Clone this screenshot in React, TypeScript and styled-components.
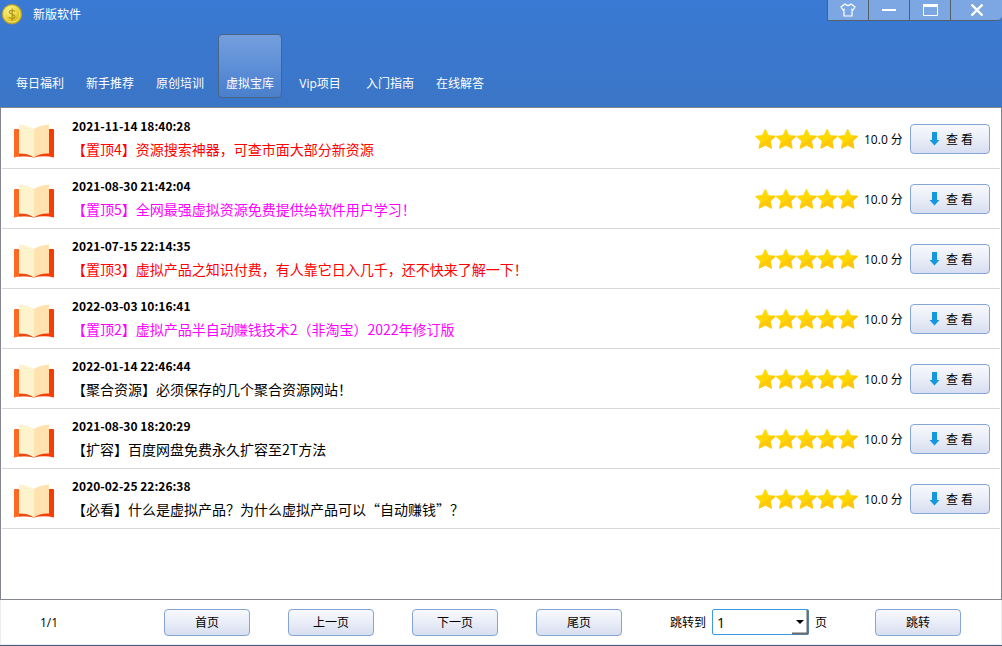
import React from "react";
import styled, { createGlobalStyle } from "styled-components";

const GlobalStyle = createGlobalStyle`
  * { box-sizing: border-box; }
  body {
    margin: 0;
    background: #fff;
    color: #000;
    font: 12px/20px "Open Sans", "Noto Sans CJK SC", sans-serif;
  }
  button, select { font: inherit; color: inherit; }
`;

const Window = styled.div`
  display: flex;
  flex-direction: column;
  min-height: 100vh;
  border-bottom: 1px solid #465f7d;
`;

const Header = styled.header`
  display: flex;
  flex-direction: column;
  color: #fff;
  background: linear-gradient(#3a7ad4, #3b75c6);
`;

const TitleBar = styled.div`
  display: flex;
  justify-content: space-between;
  align-items: flex-start;
  height: 34px;
  padding-left: 1px;
`;

const Brand = styled.h1`
  display: flex;
  align-items: flex-start;
  gap: 10px;
  margin: 0;
  padding-top: 3px;
  font-size: 12px;
  font-weight: 400;
  line-height: 24px;
`;

const WindowControls = styled.div`
  display: flex;
  height: 21px;
  overflow: hidden;
  border: solid #52616c;
  border-width: 0 0 1px 1px;
  border-bottom-right-radius: 5px;
`;

const WindowButton = styled.button<{ $last?: boolean }>`
  display: flex;
  align-items: center;
  justify-content: center;
  width: ${(p) => (p.$last ? "51px" : "41px")};
  padding: 0;
  border: 0;
  border-right: ${(p) => (p.$last ? "0" : "1px solid #52616c")};
  background: #7da7e3;
`;

const Tabs = styled.nav`
  display: flex;
  gap: 6px;
  padding: 0 8px 9px;
`;

const Tab = styled.a<{ $active?: boolean }>`
  display: flex;
  align-items: flex-end;
  justify-content: center;
  width: 64px;
  height: 64px;
  padding-bottom: 3px;
  border: 1px solid ${(p) => (p.$active ? "#4a6488" : "transparent")};
  border-radius: 4px;
  background: ${(p) => (p.$active ? "linear-gradient(#759fde, #5a8cd5 60%, #4a7fcb)" : "none")};
  color: #fff;
  text-decoration: none;
  white-space: nowrap;
`;

const List = styled.ul`
  flex: 1;
  margin: 0;
  padding: 1px;
  border: 1px solid #84868f;
  list-style: none;
`;

const Row = styled.li`
  display: flex;
  align-items: flex-start;
  height: 60px;
  padding: 0 10px 0 11px;
  border-bottom: 1px solid #d8d8d8;
`;

const BookIcon = styled.svg`
  flex: none;
  width: 42px;
  height: 36px;
  margin-top: 14px;
`;

const Details = styled.div`
  flex: 1;
  min-width: 0;
  padding: 6px 0 0 17px;
`;

const DateText = styled.time`
  display: block;
  font-family: "Noto Sans CJK SC", sans-serif;
  font-weight: 700;
  line-height: 22px;
`;

const Title = styled.div<{ $color: string }>`
  color: ${(p) => p.$color};
  font-family: "Noto Sans CJK SC", sans-serif;
  font-size: 14px;
  line-height: 24px;
  white-space: nowrap;
  overflow: hidden;
  text-overflow: ellipsis;
`;

const Actions = styled.div`
  display: flex;
  align-items: center;
  height: 60px;
`;

const Stars = styled.svg`
  width: 103px;
  height: 22px;
`;

const Score = styled.span`
  width: 52px;
  padding: 2px 0 0 6px;
  white-space: nowrap;
`;

const Button = styled.button`
  display: flex;
  align-items: center;
  justify-content: center;
  border: 1px solid #84a5d6;
  border-radius: 4px;
  background: linear-gradient(#f8f9fd, #e9edf7 50%, #d7def0);
  padding: 0;
  white-space: pre;
`;

const ViewButton = styled(Button)`
  gap: 6px;
  width: 80px;
  height: 30px;
  padding-left: 2px;
`;

const ViewLabel = styled.span`
  padding-top: 2px;
`;

const PageButton = styled(Button)`
  width: 86px;
  height: 27px;
  padding-top: 1px;
`;

const Footer = styled.footer`
  display: flex;
  align-items: center;
  gap: 38px;
  height: 45px;
  padding: 0 40px 0 39px;
  border: 1px solid #ececee;
  border-top: 0;
`;

const PageCount = styled.span`
  width: 86px;
  padding-top: 2px;
`;

const Jump = styled.div`
  display: flex;
  align-items: center;
  gap: 6px;
  margin-left: auto;
  padding-right: 10px;
`;

const JumpLabel = styled.label`
  padding-top: 2px;
`;

const SelectBox = styled.span`
  position: relative;
  display: flex;
`;

const Select = styled.select`
  appearance: none;
  width: 97px;
  height: 26px;
  padding: 1px 20px 0 4px;
  border: 1px solid #3c9be0;
  border-radius: 2px;
  background: #fff;
  font-size: 14px;
`;

const SelectArrow = styled.svg`
  position: absolute;
  right: 0;
  bottom: 0;
  width: 18px;
  height: 26px;
  pointer-events: none;
`;

const tabs = ["每日福利", "新手推荐", "原创培训", "虚拟宝库", "Vip项目", "入门指南", "在线解答"];

const items = [
  { date: "2021-11-14 18:40:28", title: "【置顶4】资源搜索神器，可查市面大部分新资源", color: "#f00" },
  { date: "2021-08-30 21:42:04", title: "【置顶5】全网最强虚拟资源免费提供给软件用户学习！", color: "#f0f" },
  { date: "2021-07-15 22:14:35", title: "【置顶3】虚拟产品之知识付费，有人靠它日入几千，还不快来了解一下！", color: "#f00" },
  { date: "2022-03-03 10:16:41", title: "【置顶2】虚拟产品半自动赚钱技术2（非淘宝）2022年修订版", color: "#f0f" },
  { date: "2022-01-14 22:46:44", title: "【聚合资源】必须保存的几个聚合资源网站！", color: "#000" },
  { date: "2021-08-30 18:20:29", title: "【扩容】百度网盘免费永久扩容至2T方法", color: "#000" },
  { date: "2020-02-25 22:26:38", title: "【必看】什么是虚拟产品？为什么虚拟产品可以“自动赚钱”？", color: "#000" },
];

const Coin = () => (
  <svg width="22" height="22" viewBox="0 0 22 22" aria-hidden="true">
    <defs>
      <radialGradient id="coin" cx="40%" cy="35%">
        <stop offset="0" stopColor="#fbf6a0" />
        <stop offset=".6" stopColor="#eddc48" />
        <stop offset="1" stopColor="#d9bd22" />
      </radialGradient>
    </defs>
    <circle cx="11" cy="11.300" r="9.800" fill="url(#coin)" stroke="#b39a24" strokeWidth=".8" />
    <circle cx="11" cy="11.300" r="7.800" fill="none" stroke="#f7f08c" strokeWidth=".8" />
    <path
      d="M14 8.600C13.400 7 8.500 6.600 8.300 9c-.2 2.300 5.700 2.100 5.500 4.600-.2 2.400-5 2.200-5.900.4M11.200 5.500v12.200"
      fill="none"
      stroke="#b3981c"
      strokeWidth="1.300"
    />
  </svg>
);

const Book = () => (
  <BookIcon viewBox="0 0 42 36" aria-hidden="true">
    <path d="M1 7q0-1 1-1h19v28.500Q11 32 1 34.500z" fill="#ff6a22" />
    <path d="M41 7q0-1-1-1H21v28.500Q31 32 41 34.500z" fill="#f53d05" />
    <path d="M6 31q9-1.500 15 3.500-7-2-15-1z" fill="#e84a10" />
    <path d="M6 1.500q9 .5 15 4.500v28.500Q15 30 6 30.500z" fill="#fff3cd" />
    <path d="M36 1.500q-9 .5-15 4.500v28.500q6-4.500 15-4z" fill="#ffe2b0" />
  </BookIcon>
);

const Rating = () => (
  <Stars viewBox="0 0 103 22" role="img" aria-label="五星">
    {[0, 1, 2, 3, 4].map((n) => (
      <g key={n} transform={`translate(${n * 20.6} 0)`}>
        <path
          d="M10.300 1.200l3 6.200 7 .9-5.100 4.700 1.300 7.300-6.200-3.200-6.200 3.200 1.300-7.300L.3 8.300l7-.9z"
          fill="#ffd800"
          stroke="#ffd800"
          strokeWidth=".8"
          strokeLinejoin="round"
        />
        <path
          d="M17.800 8l2.500.3-5.100 4.700 1.300 7.300-6.200-3.200-6.200 3.200.6-3.600z"
          fill="#ffc808"
          stroke="#ffc808"
          strokeWidth=".6"
          strokeLinejoin="round"
        />
      </g>
    ))}
  </Stars>
);

const DownArrow = () => (
  <svg width="11" height="14" viewBox="0 0 11 14" aria-hidden="true">
    <path d="M3 0h5v8h2.500l-5 5.500L.5 8H3z" fill="#1597e0" />
  </svg>
);

export default function App() {
  return (
    <>
      <GlobalStyle />
      <Window>
        <Header>
          <TitleBar>
            <Brand>
              <Coin />
              新版软件
            </Brand>
            <WindowControls>
              <WindowButton aria-label="换肤">
                <svg width="16" height="14" viewBox="0 0 16 14" fill="none" stroke="#fff" strokeWidth="1.200">
                  <path d="M5 1L1 4l2 3 1-.7V13h8V6.300l1 .7 2-3-4-3Q8 4 5 1z" />
                </svg>
              </WindowButton>
              <WindowButton aria-label="最小化">
                <svg width="14" height="2">
                  <path d="M0 1h14" stroke="#fff" strokeWidth="2" />
                </svg>
              </WindowButton>
              <WindowButton aria-label="最大化">
                <svg width="15" height="12" fill="none" stroke="#fff">
                  <path d="M.5 .5h14v11H.5z" />
                  <path d="M0 1.500h15" strokeWidth="3" />
                </svg>
              </WindowButton>
              <WindowButton aria-label="关闭" $last>
                <svg width="14" height="12" viewBox="0 0 14 12">
                  <path d="M1.500 .5l11 11M12.500 .5l-11 11" stroke="#fff" strokeWidth="2.400" />
                </svg>
              </WindowButton>
            </WindowControls>
          </TitleBar>
          <Tabs>
            {tabs.map((name) => (
              <Tab key={name} href="#" $active={name === "虚拟宝库"}>
                {name}
              </Tab>
            ))}
          </Tabs>
        </Header>
        <List>
          {items.map((item) => (
            <Row key={item.date}>
              <Book />
              <Details>
                <DateText>{item.date}</DateText>
                <Title $color={item.color}>{item.title}</Title>
              </Details>
              <Actions>
                <Rating />
                <Score>10.0 分</Score>
                <ViewButton>
                  <DownArrow />
                  <ViewLabel>查 看</ViewLabel>
                </ViewButton>
              </Actions>
            </Row>
          ))}
        </List>
        <Footer>
          <PageCount>1/1</PageCount>
          <PageButton>首页</PageButton>
          <PageButton>上一页</PageButton>
          <PageButton>下一页</PageButton>
          <PageButton>尾页</PageButton>
          <Jump>
            <JumpLabel htmlFor="page">跳转到</JumpLabel>
            <SelectBox>
              <Select id="page" defaultValue="1">
                <option>1</option>
              </Select>
              <SelectArrow viewBox="0 0 18 26" aria-hidden="true">
                <path d="M5 11h8l-4 4z" fill="#000" />
                <path d="M1 24.500h15.500V1" fill="none" stroke="#6b6b6b" strokeWidth="2" />
              </SelectArrow>
            </SelectBox>
            <JumpLabel htmlFor="page">页</JumpLabel>
          </Jump>
          <PageButton>跳转</PageButton>
        </Footer>
      </Window>
    </>
  );
}
